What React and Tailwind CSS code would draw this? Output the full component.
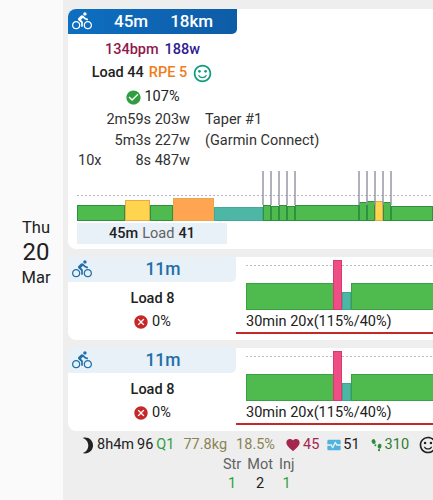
import {
  MdBrightness3,
  MdCancel,
  MdCheckCircle,
  MdDirectionsBike,
  MdFavorite,
  MdMonitorHeart,
  MdOutlineSentimentSatisfied,
} from 'react-icons/md';

const GREEN = '#4fbb4f';
const YELLOW = '#ffd54f';
const ORANGE = '#ffa552';
const TEAL = '#4db6a4';
const PINK = '#ee4d85';

const rideBlocks = [
  { x: 0, w: 48, top: 36, fill: GREEN },
  { x: 48, w: 25, top: 31, fill: YELLOW },
  { x: 73, w: 23, top: 36, fill: GREEN },
  { x: 96, w: 41, top: 29, fill: ORANGE },
  { x: 137, w: 49, top: 38, fill: TEAL },
  { x: 186, w: 8, top: 36, fill: GREEN },
  { x: 194, w: 8, top: 37, fill: GREEN },
  { x: 202, w: 8, top: 36, fill: GREEN },
  { x: 210, w: 8, top: 37, fill: GREEN },
  { x: 218, w: 64, top: 36, fill: GREEN },
  { x: 282, w: 8, top: 33, fill: GREEN },
  { x: 290, w: 8, top: 32, fill: GREEN },
  { x: 298, w: 8, top: 32, fill: YELLOW },
  { x: 306, w: 8, top: 33, fill: GREEN },
  { x: 314, w: 42, top: 37, fill: GREEN },
];
const spikes = [186, 194, 202, 210, 218, 282, 290, 298, 306, 314];

function RideChart() {
  return (
    <svg width="356" height="52" className="ml-[9px] block">
      <line x1="0" x2="356" y1="26.5" y2="26.5" stroke="#b9b6c2" strokeDasharray="2 2" />
      {rideBlocks.map((b) => (
        <rect
          key={b.x}
          x={b.x + 0.5}
          y={b.top + 0.5}
          width={b.w - 1}
          height={51 - b.top}
          fill={b.fill}
          stroke={b.fill === GREEN ? '#2f9140' : b.fill === TEAL ? '#45a896' : '#e8a94a'}
        />
      ))}
      {spikes.map((x) => (
        <rect key={x} x={x - 0.75} y="2" width="1.5" height="34" fill="#9b97a8" />
      ))}
    </svg>
  );
}

function IntervalChart() {
  return (
    <svg width="197" height="53" className="block">
      <line x1="10" x2="197" y1="8.5" y2="8.5" stroke="#bdbdbd" strokeDasharray="2 2" />
      <rect x="10.5" y="26.5" width="87" height="26" fill={GREEN} stroke="#3aa046" />
      <rect x="97.5" y="3.5" width="8" height="49" fill={PINK} stroke="#d83a70" />
      <rect x="106.5" y="35.5" width="8" height="17" fill={TEAL} stroke="#3aa88f" />
      <rect x="115.5" y="26.5" width="82" height="26" fill={GREEN} stroke="#3aa046" />
    </svg>
  );
}

function Footprints() {
  return (
    <svg width="11" height="13" viewBox="0 0 11 13" className="ml-[11px]" fill="#2e8b3d">
      <ellipse cx="2.6" cy="2.6" rx="1.9" ry="2.5" transform="rotate(-15 2.6 2.6)" />
      <circle cx="4.4" cy="6.2" r="1" />
      <ellipse cx="8.6" cy="7.2" rx="1.9" ry="2.5" transform="rotate(10 8.6 7.2)" />
      <circle cx="8" cy="11.2" r="1.1" />
    </svg>
  );
}

function IntervalCard() {
  return (
    <div className="flex h-[83px] rounded-l-lg bg-white">
      <div className="w-[168px] shrink-0">
        <div className="relative flex h-[25px] items-center justify-center rounded-br-[5px] bg-[#e8f0f8] pl-[22px] text-[17.5px] font-medium text-[#1f6fa8]">
          <MdDirectionsBike className="absolute left-[4px] top-[2px] text-[#1f6fa8]" size={20} />
          11m
        </div>
        <div className="mt-[7px] flex h-[20px] items-center justify-center pl-[1px] text-[14.5px] font-medium text-[#212121]">Load 8</div>
        <div className="mt-[3px] flex h-[20px] items-center justify-center gap-[3px] text-[14.5px] text-[#212121]">
          <MdCancel className="text-[#c62828]" size={16} />
          0%
        </div>
      </div>
      <div className="flex-1">
        <IntervalChart />
        <div className="h-[22px] pl-[10px] pt-[2px] text-[14.5px] leading-[19px] text-[#212121]">30min 20x(115%/40%)</div>
        <div className="h-[2px] bg-[#c62828]" />
      </div>
    </div>
  );
}

export default function App() {
  return (
    <div className="flex h-[500px] w-[433px] overflow-hidden bg-[#eeeeee] font-[Roboto,sans-serif] text-[#212121]">
      <div className="flex w-[63px] shrink-0 flex-col items-center justify-center bg-[#fafafa] pl-[9px] pt-[4px] text-[#212121]">
        <div className="text-[16.5px] leading-[25px]">Thu</div>
        <div className="text-[24px] leading-[25px]">20</div>
        <div className="text-[16.5px] leading-[25px]">Mar</div>
      </div>

      <div className="min-w-0 flex-1 pl-[5px] pt-[9px]">
        <div className="h-[240px] rounded-l-lg bg-white">
          <div className="relative flex h-[25px] w-[169px] items-center rounded-tl-lg rounded-br-[5px] bg-gradient-to-r from-[#0d6fc2] to-[#0e5ca6] pl-[46px] text-[17px] font-medium text-white">
            <MdDirectionsBike className="absolute left-[4px] top-[2px]" size={20} />
            <span>45m</span>
            <span className="ml-[22px]">18km</span>
          </div>

          <div className="w-[169px]">
            <div className="mt-[6px] flex h-[20px] items-center justify-center gap-[6px] text-[14.5px] font-medium">
              <span className="text-[#8e1a4c]">134bpm</span>
              <span className="text-[#311b92]">188w</span>
            </div>
            <div className="mt-[3px] flex h-[20px] items-center justify-center text-[14.5px] font-medium">
              <span>Load 44</span>
              <span className="ml-[5px] text-[#ef7d1a]">RPE 5</span>
              <MdOutlineSentimentSatisfied className="ml-[5px] text-[#0f9d7a]" size={21} />
            </div>
            <div className="mt-[4px] flex h-[20px] items-center justify-center gap-[2px] text-[14.5px]">
              <MdCheckCircle className="text-[#2e9e3f]" size={17} />
              107%
            </div>
          </div>

          <div className="mt-[3px] flex h-[59px] text-[14.5px] leading-[20.5px] text-[#333333]">
            <div className="w-[122px] pl-[10px]">
              <div className="text-right">2m59s 203w</div>
              <div className="text-right">5m3s 227w</div>
              <div className="flex justify-between">
                <span>10x</span>
                <span>8s 487w</span>
              </div>
            </div>
            <div className="ml-[15px] whitespace-nowrap">
              <div>Taper #1</div>
              <div>(Garmin Connect)</div>
            </div>
          </div>

          <RideChart />

          <div className="ml-[9px] mt-[2px] flex h-[21px] w-[150px] items-center justify-center gap-[4px] bg-[#e8f0f8] text-[14.5px]">
            <span className="font-medium">45m</span>
            <span className="text-[#616161]">Load</span>
            <span className="font-medium">41</span>
          </div>
        </div>

        <div className="mt-[8px] flex flex-col gap-[8px]">
          <IntervalCard />
          <IntervalCard />
        </div>

        <div className="mt-[4px] flex h-[20px] w-[400px] items-center whitespace-nowrap pl-[10px] text-[14.5px]">
          <MdBrightness3 className="text-[#212121]" size={19} />
          <span>8h4m</span>
          <span className="ml-[3px]">96</span>
          <span className="ml-[3px] text-[#2e9e3f]">Q1</span>
          <span className="ml-[9px] text-[#8a8455]">77.8kg</span>
          <span className="ml-[9px] text-[#8a8455]">18.5%</span>
          <MdFavorite className="ml-[10px] text-[#a5264f]" size={16} />
          <span className="ml-[2px] text-[#a5264f]">45</span>
          <MdMonitorHeart className="ml-[7px] text-[#4fb3e0]" size={16} />
          <span className="ml-[1px]">51</span>
          <Footprints />
          <span className="ml-[3px] text-[#2e7d32]">310</span>
          <MdOutlineSentimentSatisfied className="ml-[9px] shrink-0 text-[#212121]" size={20} />
        </div>

        <div className="ml-[155px] mt-[1px] flex gap-[6px] text-center text-[14.5px] leading-[18.5px] text-[#616161]">
          <div>
            <div>Str</div>
            <div className="text-[#2e9e3f]">1</div>
          </div>
          <div>
            <div>Mot</div>
            <div className="text-[#212121]">2</div>
          </div>
          <div>
            <div>Inj</div>
            <div className="text-[#2e9e3f]">1</div>
          </div>
        </div>
      </div>
    </div>
  );
}
